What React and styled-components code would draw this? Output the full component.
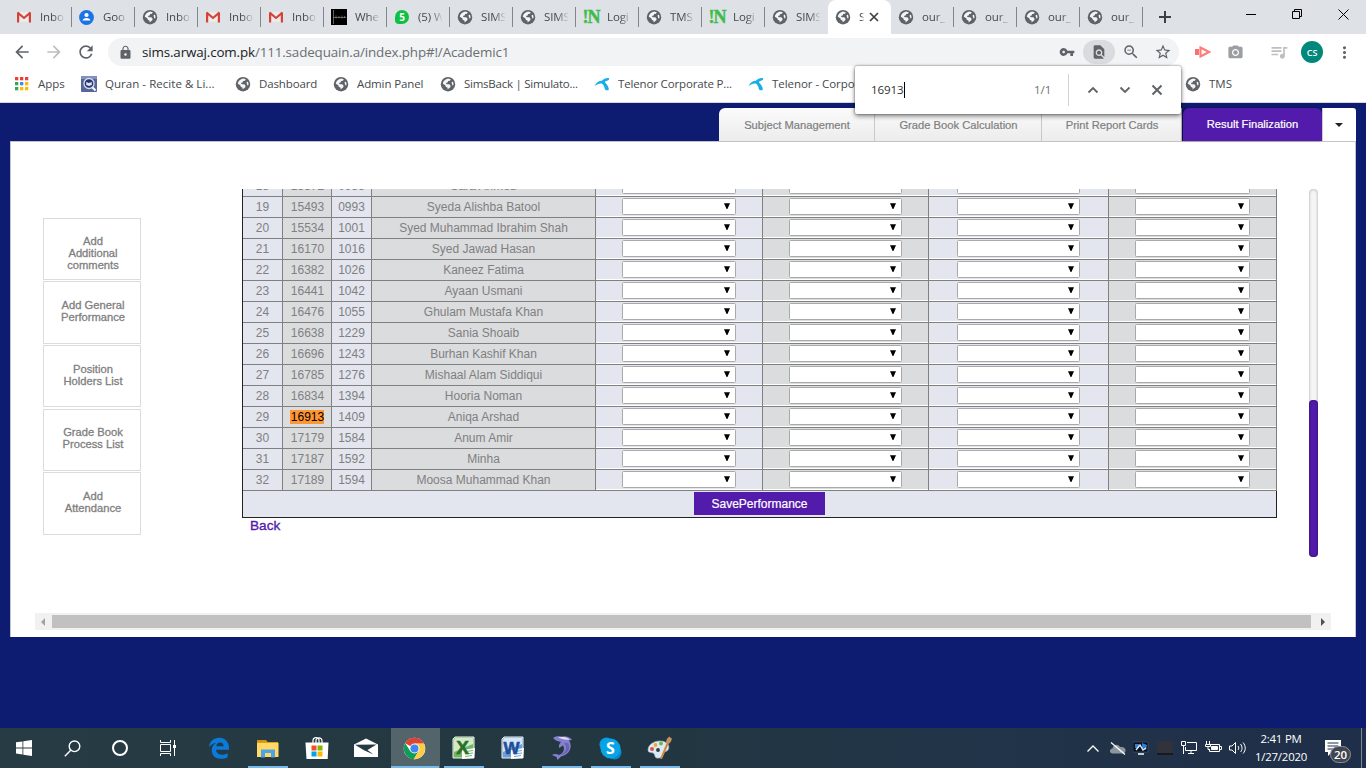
import React from 'react';
import styled, { createGlobalStyle, css } from 'styled-components';
import {
  MdArrowBack, MdArrowForward, MdRefresh, MdLock, MdVpnKey, MdFindInPage,
  MdZoomOut, MdStarBorder, MdCameraAlt, MdMoreVert, MdQueueMusic,
} from 'react-icons/md';

const Global = createGlobalStyle`
  * { box-sizing: border-box; }
  body { margin: 0; background: #0d1c71; overflow: hidden; }
`;

const ui = css`font-family: "Open Sans", "Noto Sans", sans-serif;`;
const arial = css`font-family: "Liberation Sans", Arial, sans-serif;`;

const Screen = styled.div`
  width: 1366px;
  height: 768px;
  display: flex;
  flex-direction: column;
  position: relative;
  overflow: hidden;
  background: #0d1c71;
`;

/* ---------- browser frame ---------- */

const TabStrip = styled.div`
  ${ui}
  height: 34px;
  flex: none;
  display: flex;
  background: #dee1e6;
  padding-left: 9px;
`;

const Tab = styled.div`
  width: 63px;
  height: 34px;
  flex: none;
  display: flex;
  align-items: center;
  padding-left: 7px;
  color: #45494d;
  font-size: 11.5px;
  letter-spacing: -0.1px;
  background: ${(p) => (p.$active ? '#fff' : 'transparent')};
  border-radius: ${(p) => (p.$active ? '8px 8px 0 0' : '0')};
  &::after {
    content: '';
    display: ${(p) => (p.$active || p.$plain ? 'none' : 'block')};
    margin-left: auto;
    width: 1px;
    height: 20px;
    background: #80868b;
  }
`;

const TabTitle = styled.span`
  width: ${(p) => (p.$short ? 5 : 24)}px;
  margin-left: 8px;
  overflow: hidden;
  white-space: nowrap;
  line-height: 18px;
  mask-image: linear-gradient(to right, #000 55%, transparent 105%);
`;

const Favicon = styled.span`
  width: 16px;
  height: 16px;
  flex: none;
  display: flex;
  align-items: center;
  justify-content: center;
  color: #5f6368;
`;

const CloseGlyph = styled.span`
  display: flex;
  margin-left: 5px;
  color: #3c4043;
`;

const NewTab = styled.div`
  display: flex;
  align-items: center;
  justify-content: center;
  width: 20px;
  margin-left: 12px;
  color: #3c4043;
`;

const WindowButtons = styled.div`
  display: flex;
  margin-left: auto;
  height: 29px;
  align-items: center;
`;

const WindowButton = styled.div`
  width: 46px;
  display: flex;
  justify-content: center;
`;

const Toolbar = styled.div`
  ${ui}
  height: 34px;
  flex: none;
  display: flex;
  align-items: center;
  background: #fff;
  padding: 2px 6px 0 6px;
  color: #5f6368;
`;

const ToolButton = styled.div`
  width: ${(p) => p.$w || 32}px;
  height: 24px;
  flex: none;
  display: flex;
  align-items: center;
  justify-content: center;
  color: ${(p) => p.$color || '#5f6368'};
  background: ${(p) => p.$bg || 'transparent'};
  border-radius: 12px;
`;

const Omnibox = styled.div`
  width: 1071px;
  height: 28px;
  margin-left: 6px;
  flex: none;
  display: flex;
  align-items: center;
  background: #f1f3f4;
  border-radius: 14px;
  padding-left: 10px;
`;

const Url = styled.div`
  flex: 1;
  margin-left: 9px;
  font-size: 13.4px;
  letter-spacing: -0.14px;
  white-space: nowrap;
  color: #6b6f73;
  b { font-weight: 400; color: #202124; }
`;

const Avatar = styled.div`
  width: 22px;
  height: 22px;
  border-radius: 50%;
  background: #00897b;
  color: #fff;
  font-size: 9px;
  font-weight: 600;
  display: flex;
  align-items: center;
  justify-content: center;
`;

const ToolDivider = styled.div`
  width: 1px;
  height: 16px;
  margin: 0 5px 0 13px;
  background: #c9ccd0;
`;

const Bookmarks = styled.div`
  ${ui}
  height: 35px;
  flex: none;
  display: flex;
  align-items: center;
  background: #fff;
  border-bottom: 1px solid #d5d7da;
  padding: 0 0 2px 14px;
`;

const Bookmark = styled.div`
  width: ${(p) => p.$w}px;
  flex: none;
  display: flex;
  align-items: center;
  gap: 8px;
  line-height: 18px;
  white-space: nowrap;
  color: #45494d;
  font-size: 11.5px;
  letter-spacing: ${(p) => p.$ls || 0}px;
`;

const FindBar = styled.div`
  ${ui}
  position: absolute;
  left: 855px;
  top: 66px;
  width: 326px;
  height: 48px;
  display: flex;
  align-items: center;
  background: #fff;
  border-radius: 2px;
  box-shadow: 0 0 2px rgba(0, 0, 0, 0.5), 0 2px 5px rgba(0, 0, 0, 0.5);
  padding-left: 16px;
  font-size: 11.6px;
  letter-spacing: -0.1px;
  color: #303134;
`;

const FindQuery = styled.div`
  width: 163px;
  display: flex;
  align-items: center;
  line-height: 16px;
`;

const Caret = styled.i`
  width: 1px;
  height: 16px;
  background: #000;
`;

const FindCount = styled.div`
  width: 34px;
  line-height: 16px;
  color: #6b6f73;
`;

const FindButtons = styled.div`
  display: flex;
  height: 32px;
  align-items: center;
  border-left: 1px solid #d2d4d7;
  padding-left: 8px;
`;

/* ---------- school portal ---------- */

const Portal = styled.main`
  ${arial}
  flex: 1;
  padding: 5px 10px 0;
`;

const PortalTabs = styled.nav`
  display: flex;
  justify-content: flex-end;
  height: 33px;
`;

const PortalTab = styled.div`
  width: ${(p) => p.$w}px;
  display: flex;
  align-items: center;
  justify-content: center;
  padding: 1px 0 0 1px;
  font-size: 11.2px;
  color: #808080;
  background: linear-gradient(#fbfbfb, #ececec);
  border-right: 1px solid #c9c9c9;
  border-radius: ${(p) => (p.$first ? '6px 0 0 0' : '0')};
  -webkit-text-stroke: 0.2px currentColor;
  ${(p) => p.$active && css`
    background: #521bac;
    color: #fff;
    padding: 0 0 1px;
    border-radius: 6px 6px 0 0;
    border-right: 0;
    margin-left: 1px;
    box-shadow: -1px 0 2px rgba(0, 0, 0, 0.5);
  `}
`;

const PortalMore = styled.div`
  width: 34px;
  display: flex;
  align-items: center;
  justify-content: center;
  padding-right: 2px;
  background: #fff;
  border-left: 1px solid #ccc;
  border-radius: 0 3px 0 0;
`;

const Panel = styled.section`
  height: 496px;
  background: #fff;
  border: 1px solid #c4c4c8;
  border-bottom: 0;
`;

const PanelBody = styled.div`
  display: flex;
  height: 471px;
`;

const SideMenu = styled.div`
  width: 98px;
  margin: 76px 0 0 32px;
  display: flex;
  flex-direction: column;
`;

const SideItem = styled.div`
  height: ${(p) => p.$h || 62}px;
  margin-bottom: ${(p) => p.$gap}px;
  padding: ${(p) => p.$top}px 13px 0 15px;
  border: 1px solid #dcdcdc;
  color: #808080;
  font-size: 11.2px;
  line-height: 12px;
  text-align: center;
  -webkit-text-stroke: 0.3px #808080;
`;

const Viewport = styled.div`
  width: 1035px;
  height: 400px;
  margin: 47px 0 0 101px;
  overflow: hidden;
`;

const Table = styled.div`
  margin-top: -13px;
  border-left: 1px solid #222;
`;

const Row = styled.div`
  display: grid;
  grid-template-columns: 40px 49px 40px 224px 167px 166px 180px 168px;
  height: 21px;
`;

const Cell = styled.div`
  display: flex;
  align-items: center;
  justify-content: center;
  padding-left: ${(p) => p.$nudge || 0}px;
  background: ${(p) => (p.$gray ? '#dbdcde' : '#e3e6ef')};
  border-right: 1px solid #808080;
  border-bottom: 1px solid #808080;
  font-size: 12px;
  color: #808080;
`;

const ChoiceCell = styled(Cell)`
  justify-content: flex-start;
  align-items: flex-start;
  padding: 1px 0 0 ${(p) => p.$inset}px;
  box-shadow: inset 0 -1px 0 #fff;
`;

const Choice = styled.div`
  width: ${(p) => p.$w}px;
  height: 17px;
  display: flex;
  align-items: flex-start;
  justify-content: flex-end;
  padding: 4px 5px 0 0;
  background: #fff;
  border: 1px solid #a9a9a9;
  border-radius: 1.5px;
`;

const Hit = styled.mark`
  background: #ff9632;
  color: #000;
  line-height: 14px;
  padding: 0 0 0 1px;
  margin-left: -1px;
`;

const SaveRow = styled.div`
  height: 27px;
  padding-top: 1px;
  background: #e3e6ef;
  border-right: 1px solid #222;
  border-bottom: 1px solid #222;
  display: flex;
  justify-content: center;
`;

const SaveButton = styled.div`
  width: 131px;
  height: 23px;
  background: #521bac;
  color: #fff;
  font-size: 12px;
  -webkit-text-stroke: 0.2px #fff;
  display: flex;
  align-items: center;
  justify-content: center;
`;

const BackLink = styled.div`
  margin-left: 8px;
  font-size: 13.6px;
  line-height: 15px;
  color: #521bac;
  -webkit-text-stroke: 0.35px #521bac;
`;

const ScrollTrack = styled.div`
  width: 9px;
  height: 368px;
  margin: 47px 0 0 32px;
  display: flex;
  align-items: flex-end;
  border-radius: 5px;
  background: #f5f5f5;
  box-shadow: inset 0 0 3px rgba(0, 0, 0, 0.35);
`;

const ScrollThumb = styled.div`
  width: 9px;
  height: 157px;
  border-radius: 4px;
  background: #521bac;
  box-shadow: inset 0 0 3px rgba(0, 0, 0, 0.5);
`;

const HScroll = styled.div`
  width: 1296px;
  height: 17px;
  margin-left: 24px;
  display: flex;
  align-items: center;
  justify-content: space-between;
  background: #f1f1f1;
`;

const HThumb = styled.div`
  width: 1259px;
  height: 13px;
  background: #c1c1c1;
`;

const HArrow = styled.div`
  flex: 1;
  display: flex;
  justify-content: center;
  padding-right: 1px;
  &:last-child { flex: none; width: 20px; padding-left: 4px; }
`;

/* ---------- taskbar ---------- */

const Taskbar = styled.footer`
  ${ui}
  height: 40px;
  flex: none;
  display: flex;
  color: #fff;
  background: linear-gradient(to right, #263b43, #233741 45%, #213448 70%, #1f2e49);
`;

const Task = styled.div`
  width: ${(p) => p.$w || 49}px;
  height: 40px;
  display: flex;
  align-items: center;
  justify-content: center;
  padding-right: ${(p) => (p.$w ? 0 : 2)}px;
  margin-left: ${(p) => p.$gap || 0}px;
  background: ${(p) => (p.$active ? '#53646b' : 'transparent')};
  position: relative;
  &::after {
    content: '';
    position: absolute;
    bottom: 0;
    left: ${(p) => (p.$active ? 0 : 4)}px;
    right: ${(p) => (p.$active ? 1 : 5)}px;
    height: 2px;
    background: ${(p) => (p.$open ? '#76b9ed' : 'transparent')};
  }
`;

const Tray = styled.div`
  margin-left: auto;
  display: flex;
  align-items: center;
`;

const TrayIcon = styled.div`
  width: 24px;
  display: flex;
  justify-content: center;
`;

const Clock = styled.div`
  width: 64px;
  text-align: center;
  font-size: 11.4px;
  line-height: 18px;
  letter-spacing: -0.2px;
  padding-bottom: 1px;
  white-space: nowrap;
`;

const Notice = styled.div`
  width: 38px;
  height: 40px;
  margin-left: 10px;
  padding-top: 10px;
`;

const ShowDesktop = styled.div`
  width: 5px;
  height: 40px;
  border-left: 1px solid #7d8796;
`;

/* ---------- drawings ---------- */

const Globe = () => (
  <svg width="16" height="16" viewBox="0 0 16 16">
    <circle cx="8" cy="8.200" r="7.200" fill="#5f6368" />
    <path d="M6.200 3.300 8 2.400 10.800 3.200 10 4.700 8.200 5.100 7.600 6.500 5.800 7 6.800 8.300 9.300 8.300 10.600 9.800 10.300 11.300 8.700 12.600 7.600 13.500V11.700L5.800 10.700 5.300 9.300 2.800 7.800C3.100 5.700 4.300 4.200 6.200 3.300zM11.600 6 13 5.700 13.600 8.200 12.900 9.800 11.900 8.200z" fill="#f4f5f6" />
  </svg>
);

const Line = ({ d, w = 12, h = 12, sw = 2 }) => (
  <svg width={w} height={h} viewBox={`0 0 ${w} ${h}`} fill="none" stroke="currentColor" strokeWidth={sw}>
    <path d={d} />
  </svg>
);

const Gmail = () => (
  <svg width="16" height="16" viewBox="0 0 16 16">
    <path d="M2 3h12v10H2z" fill="#eceaea" />
    <path d="M1 13.400V3.600h2.200v9.800zM12.800 13.400V3.600H15v9.800z" fill="#d54236" />
    <path d="M1.600 3.600 8 9l6.400-5.400" fill="none" stroke="#d54236" strokeWidth="2.100" />
  </svg>
);

const Contact = () => (
  <svg width="16" height="16" viewBox="0 0 16 16">
    <circle cx="7.500" cy="8.500" r="7.400" fill="#1a73e8" />
    <circle cx="7.500" cy="6" r="2.100" fill="#fff" />
    <path d="M3.600 11.600c0-3.600 7.800-3.600 7.800 0z" fill="#fff" />
  </svg>
);

const BlackTile = () => (
  <svg width="16" height="16" viewBox="0 0 16 16">
    <path d="M0 0h16v16H0z" fill="#000" />
    <path d="M2.500 1v14M2 8.500h13M5 6.500v3M8 7v2M11 6.500v3M13.500 7v2" stroke="#8a8a8a" strokeWidth=".7" />
  </svg>
);

const FavText = styled.span`
  width: 14px;
  height: 14px;
  border-radius: 7px 7px 7px 4px;
  background: #0dc143;
  color: #fff;
  font-size: 10px;
  font-weight: 700;
  line-height: 14px;
  text-align: center;
`;

const SerifMark = styled.span`
  color: #3dbb4c;
  font: 700 18px/18px "Liberation Serif", serif;
  letter-spacing: -1px;
  -webkit-text-stroke: 0.4px #3dbb4c;
`;

const AppsGrid = () => (
  <svg width="16" height="16" viewBox="0 0 16 16">
    {['#ea4335', '#ea4335', '#ea4335', '#34a853', '#4285f4', '#fbbc05', '#34a853', '#fbbc05', '#fbbc05'].map((c, i) => (
      <rect key={i} x={1 + (i % 3) * 5} y={1 + Math.floor(i / 3) * 5} width="3.300" height="3.300" fill={c} />
    ))}
  </svg>
);

const Quran = () => (
  <svg width="16" height="16" viewBox="0 0 16 16">
    <rect width="16" height="16" rx="1" fill="#56669b" />
    <path d="M0 0h16v3H0z" fill="#8190bd" />
    <circle cx="8" cy="7.500" r="5" fill="#26366e" stroke="#d6dcee" strokeWidth="1.300" />
    <path d="M5.200 6 8 7l2.800-1v3L8 10 5.200 9z" fill="#dfe5f5" />
    <path d="m11.500 11.500 3 3" stroke="#fff" strokeWidth="2" />
  </svg>
);

const Telenor = () => (
  <svg width="16" height="16" viewBox="0 0 16 16">
    <path d="M.6 9.800C2.600 6.200 5.400 4.600 7.800 4.800 9.500 2.800 12 1.700 14.800 2c1 1.200-.1 2.300-1.700 2.700-1.200.3-1.900.8-2.200 1.500 1.700 2 4 4.400 4 7.300-1.500 1.700-3.900.7-4.200-1.100-.3-2-1.100-3.400-2.300-4.500C6 6.900 3.600 8.200.6 9.800z" fill="#19aee8" />
  </svg>
);

const CastArrow = () => (
  <svg width="16" height="12" viewBox="0 0 16 12">
    <path d="M0 3h4v6H0z" fill="#ff6d6d" />
    <path d="M5.500 1.500V10.500L14 6z" fill="none" stroke="#ff7b7b" strokeWidth="2.100" />
  </svg>
);

const DownArrow = () => (
  <svg width="6" height="6" viewBox="0 0 6 6"><path d="M0 .3h6L3.400 6h-.8z" fill="#000" /></svg>
);

const Windows = () => (
  <svg width="16" height="16" viewBox="0 0 16 16" fill="#fff">
    <path d="M0 2.300 6.500 1.400V7.500H0zM7.300 1.300 16 0v7.500H7.300zM0 8.400h6.500v6.100L0 13.600zM7.300 8.400H16V16l-8.700-1.300z" />
  </svg>
);

const SearchGlyph = () => (
  <svg width="17" height="17" viewBox="0 0 17 17" fill="none" stroke="#fff" strokeWidth="1.400">
    <circle cx="10.500" cy="6.300" r="5.300" /><path d="M6.700 10.200.8 16.200" />
  </svg>
);

const Cortana = () => (
  <svg width="18" height="18" viewBox="0 0 18 18"><circle cx="9" cy="9" r="7" fill="none" stroke="#fff" strokeWidth="2" /></svg>
);

const TaskView = () => (
  <svg width="18" height="16" viewBox="0 0 18 16" fill="none" stroke="#fff">
    <path d="M1.500 0v2.500h10V0M1.500 16v-2.500h10V16M1.500 4.500h10v7h-10zM15.500 0v16" />
    <path d="M14 5h3v3h-3z" fill="#fff" stroke="none" />
  </svg>
);

const Edge = () => (
  <svg width="22" height="22" viewBox="0 0 22 22">
    <path d="M1 10.300C1.600 4.500 5.600.8 11.200.8c6 0 9.800 4.400 9.800 10v2H8.100c.2 3.500 3 4.900 6 4.900 2.300 0 4-.6 5.500-1.500v4.100c-1.900 1-4.200 1.500-6.600 1.500-5.700 0-9.300-3.400-9.300-8.500 0-3.300 1.700-6 4.700-7.500C5.100 6.300 2.700 7.700 1 10.300zm7.200-1h7.400c0-2.300-1-3.900-3.500-3.900-2.200 0-3.700 1.700-3.900 3.900z" fill="#0a7bdc" />
  </svg>
);

const Folder = () => (
  <svg width="22" height="19" viewBox="0 0 22 19">
    <path d="M0 1h9l1.500 2H21v15H0z" fill="#e0a21b" />
    <path d="M0 4h21.500v14H0z" fill="#ffd866" />
    <path d="M4 18.500V10.500h14v8h-4V14H8v4.500z" fill="#4da3e6" />
    <path d="M0 1h9v2H0z" fill="#d5930d" />
  </svg>
);

const Store = () => (
  <svg width="24" height="24" viewBox="0 0 24 24">
    <path d="M8 7V4.500C8 1 13 .5 14 3.500V7M11 7V4c1-3.500 6-2.500 6 .8V7" fill="none" stroke="#fff" strokeWidth="1.200" />
    <path d="M.5 6.500h23l-.8 16.500H1.500z" fill="#fff" />
    <path d="M6.500 9.500h5v5h-5z" fill="#f04f23" /><path d="M12.500 9.500h5v5h-5z" fill="#7fb900" />
    <path d="M6.500 15.500h5v5h-5z" fill="#00a3ee" /><path d="M12.500 15.500h5v5h-5z" fill="#feb800" />
  </svg>
);

const Mail = () => (
  <svg width="24" height="20" viewBox="0 0 24 20">
    <path d="M0 6.500 12 .5l12 6V19H0z" fill="#fff" />
    <path d="m1 6.800 21.500-.2L13.500 12l6 4.500L10 12.300z" fill="#263b43" />
  </svg>
);

const Chrome = () => (
  <svg width="23" height="23" viewBox="0 0 48 48">
    <circle cx="24" cy="24" r="22.500" fill="#fff" />
    <path d="M24 24 4.500 12.800A22.500 22.500 0 0 1 43.500 12.800L43 14H24z" fill="#db4437" />
    <path d="M4.500 12.800A22.500 22.500 0 0 0 22.500 46.500L32.700 29 24 24l-8.700 5z" fill="#0f9d58" />
    <path d="M43.500 13.700A22.500 22.500 0 0 1 22.500 46.500L32.700 29 33 19 24 13.700z" fill="#ffcd40" />
    <circle cx="24" cy="24" r="10.500" fill="#f1f1f1" /><circle cx="24" cy="24" r="8.300" fill="#4285f4" />
  </svg>
);

const OfficeTile = ({ letter, ink, pale, mid }) => (
  <svg width="24" height="24" viewBox="0 0 24 24">
    <path d="M3 1h19v21H1V3z" fill={mid} stroke="#eef3f3" />
    <path d="M3 2h18v6L2 16V4z" fill={pale} />
    <path d="m10 14 13-2-1 10-12 1z" fill="#fff" />
    <path d="m14 15.500 7-1M13 18l8-1M13 20.500l7-1" stroke={mid} />
    <text x="10.500" y="17.500" textAnchor="middle" fill={ink} stroke={ink} strokeWidth=".6" fontFamily="Liberation Sans, sans-serif" fontWeight="700" fontSize={letter === 'W' ? 17 : 19}>{letter}</text>
  </svg>
);

const Dolphin = () => (
  <svg width="24" height="26" viewBox="0 0 24 26">
    <path d="M3 3C6 .5 9 1 11 2c3-1.500 7-1 11 2.500-1 .8-2 1-3 .8C23 12 20 19.500 11 21.500L7.500 25l-1-3L2 20c2-1.500 5-1 7 0 5-2 6-6 4-9.500L9 13c-.5-3 .5-4.500 2-6C8 6.500 5 5.500 3 3z" fill="#8580ce" />
    <path d="M8 2c5-.5 8 0 12 2.500-5 .5-8 0-12-2.500z" fill="#dedcf5" />
    <path d="M14 8c4 5 2 9-3 12 7-1 10-6 7-12z" fill="#6a64b4" />
  </svg>
);

const SkypeGlyph = () => (
  <svg width="23" height="23" viewBox="0 0 23 23">
    <circle cx="7.500" cy="7.500" r="7" fill="#0c9be0" />
    <circle cx="15.500" cy="15.500" r="7" fill="#0987cd" />
    <circle cx="11.500" cy="11.500" r="10" fill="#08a5e6" />
    <text x="11.500" y="17" textAnchor="middle" fill="#fff" fontFamily="Open Sans, sans-serif" fontWeight="700" fontSize="16">S</text>
  </svg>
);

const Paint = () => (
  <svg width="25" height="24" viewBox="0 0 25 24">
    <path d="M1 14C1 8 8 4.500 14 5c6 .5 9 4 7.500 8-1 3-4 2-5 4s0 4-4 5C6 23 9 18 6 17c-2-.7-5 0-5-3z" fill="#dbeaf3" stroke="#90b2c8" strokeWidth=".6" />
    <circle cx="5" cy="13" r="2" fill="#e2504a" /><circle cx="8.500" cy="9" r="1.900" fill="#f0a730" /><circle cx="14" cy="7.500" r="1.900" fill="#65b84c" /><circle cx="11" cy="14" r="1.900" fill="#263b43" />
    <path d="m13 23 6.500-16 2 1L15 23z" fill="#d78538" /><path d="M19 7c0-3 1-5 3.500-6.500C24 3 25 2 25 2c-.5 3-1.500 5-3.500 6z" fill="#c7905d" />
  </svg>
);

/* ---------- data ---------- */

const gmail = <Gmail />;
const globe = <Globe />;
const insight = <SerifMark>!N</SerifMark>;

const TABS = [
  ['Inbo', gmail], ['Goo', <Contact />], ['Inbo', globe], ['Inbo', gmail], ['Inbo', gmail],
  ['Whe', <BlackTile />], ['(5) W', <FavText>5</FavText>], ['SIMS', globe], ['SIMS', globe],
  ['Logi', insight], ['TMS', globe], ['Logi', insight], ['SIMS', globe], ['S', globe],
  ['our_', globe], ['our_', globe], ['our_', globe], ['our_', globe],
];

const BOOKMARKS = [
  ['Apps', <AppsGrid />, 67, 0], ['Quran - Recite & Li...', <Quran />, 154, 0.04], ['Dashboard', globe, 98, -0.12],
  ['Admin Panel', globe, 107, -0.12], ['SimsBack | Simulato...', globe, 154, -0.25], ['Telenor Corporate P...', <Telenor />, 154, -0.15],
  ['Telenor - Corpo', <Telenor />, 437, -0.05], ['TMS', globe, 80, 0],
];

const STUDENTS = [
  [18, '15372', '0988', 'Sara Ahmed'],
  [19, '15493', '0993', 'Syeda Alishba Batool'],
  [20, '15534', '1001', 'Syed Muhammad Ibrahim Shah'],
  [21, '16170', '1016', 'Syed Jawad Hasan'],
  [22, '16382', '1026', 'Kaneez Fatima'],
  [23, '16441', '1042', 'Ayaan Usmani'],
  [24, '16476', '1055', 'Ghulam Mustafa Khan'],
  [25, '16638', '1229', 'Sania Shoaib'],
  [26, '16696', '1243', 'Burhan Kashif Khan'],
  [27, '16785', '1276', 'Mishaal Alam Siddiqui'],
  [28, '16834', '1394', 'Hooria Noman'],
  [29, '16913', '1409', 'Aniqa Arshad'],
  [30, '17179', '1584', 'Anum Amir'],
  [31, '17187', '1592', 'Minha'],
  [32, '17189', '1594', 'Moosa Muhammad Khan'],
];

const SIDE = [
  ['Add Additional comments', 1, 16], ['Add General Performance', 1, 17, 63], ['Position Holders List', 2, 17],
  ['Grade Book Process List', 1, 16], ['Add Attendance', 0, 17, 63],
];

const CHOICES = [[114, 26], [113, 26], [123, 28], [115, 26]];

export default function App() {
  return (
    <Screen>
      <Global />
      <TabStrip>
        {TABS.map(([title, icon], i) => (
          <Tab key={i} $active={i === 13} $plain={i === 12}>
            <Favicon>{icon}</Favicon>
            <TabTitle $short={i === 13}>{title}</TabTitle>
            {i === 13 && <CloseGlyph><Line w={10} h={10} sw={1.7} d="m1 1 8 8m0-8-8 8" /></CloseGlyph>}
          </Tab>
        ))}
        <NewTab><Line w={12} h={12} d="M6 0v12M0 6h12" /></NewTab>
        <WindowButtons>
          <WindowButton><svg width="10" height="10"><path d="M0 4.500h10" stroke="#000" /></svg></WindowButton>
          <WindowButton><svg width="11" height="11" fill="none" stroke="#000"><path d="M.5 2.500h7v7h-7zM2.500 2V.5h7v7H8" /></svg></WindowButton>
          <WindowButton><svg width="11" height="11" stroke="#000"><path d="m.5.5 10 10m0-10-10 10" /></svg></WindowButton>
        </WindowButtons>
      </TabStrip>

      <Toolbar>
        <ToolButton><MdArrowBack size={20} /></ToolButton>
        <ToolButton $color="#bcbec1"><MdArrowForward size={20} /></ToolButton>
        <ToolButton><MdRefresh size={20} /></ToolButton>
        <Omnibox>
          <MdLock size={15} />
          <Url><b>sims.arwaj.com.pk</b>/111.sadequain.a/index.php#!/Academic1</Url>
          <ToolButton><MdVpnKey size={16} /></ToolButton>
          <ToolButton $bg="#d9dbde"><MdFindInPage size={16} /></ToolButton>
          <ToolButton><MdZoomOut size={18} /></ToolButton>
          <ToolButton><MdStarBorder size={18} /></ToolButton>
        </Omnibox>
        <ToolButton $w={48}><CastArrow /></ToolButton>
        <ToolButton $w={17} $color="#9c9ea1"><MdCameraAlt size={17} /></ToolButton>
        <ToolDivider />
        <ToolButton $w={34} $color="#bdbfc2"><MdQueueMusic size={20} /></ToolButton>
        <ToolButton><Avatar>CS</Avatar></ToolButton>
        <ToolButton><MdMoreVert size={19} /></ToolButton>
      </Toolbar>

      <Bookmarks>
        {BOOKMARKS.map(([label, icon, w, ls]) => (
          <Bookmark key={label} $w={w} $ls={ls}><Favicon>{icon}</Favicon>{label}</Bookmark>
        ))}
      </Bookmarks>

      <Portal>
        <PortalTabs>
          <PortalTab $w={156} $first>Subject Management</PortalTab>
          <PortalTab $w={167}>Grade Book Calculation</PortalTab>
          <PortalTab $w={140}>Print Report Cards</PortalTab>
          <PortalTab $w={139} $active>Result Finalization</PortalTab>
          <PortalMore><svg width="8" height="4"><path d="M0 0h8L4 4z" fill="#222" /></svg></PortalMore>
        </PortalTabs>
        <Panel>
          <PanelBody>
            <SideMenu>
              {SIDE.map(([label, gap, top, h]) => <SideItem key={label} $gap={gap} $top={top} $h={h}>{label}</SideItem>)}
            </SideMenu>
            <Viewport>
              <Table>
                {STUDENTS.map(([no, gr, id, name]) => (
                  <Row key={no}>
                    <Cell>{no}</Cell>
                    <Cell $gray $nudge={1}>{gr === '16913' ? <Hit>{gr}</Hit> : gr}</Cell>
                    <Cell>{id}</Cell>
                    <Cell $gray>{name}</Cell>
                    {CHOICES.map(([w, inset], i) => (
                      <ChoiceCell key={i} $gray={i % 2 === 1} $inset={inset}>
                        <Choice $w={w}><DownArrow /></Choice>
                      </ChoiceCell>
                    ))}
                  </Row>
                ))}
                <SaveRow><SaveButton>SavePerformance</SaveButton></SaveRow>
              </Table>
              <BackLink>Back</BackLink>
            </Viewport>
            <ScrollTrack><ScrollThumb /></ScrollTrack>
          </PanelBody>
          <HScroll>
            <HArrow><svg width="4" height="8"><path d="M4 0v8L0 4z" fill="#a3a3a3" /></svg></HArrow>
            <HThumb />
            <HArrow><svg width="4" height="8"><path d="M0 0v8l4-4z" fill="#505050" /></svg></HArrow>
          </HScroll>
        </Panel>
      </Portal>

      <Taskbar>
        <Task $w={48}><Windows /></Task>
        <Task $w={48}><SearchGlyph /></Task>
        <Task $w={48}><Cortana /></Task>
        <Task $w={48}><TaskView /></Task>
        <Task $gap={3}><Edge /></Task>
        <Task $open><Folder /></Task>
        <Task><Store /></Task>
        <Task><Mail /></Task>
        <Task $open $active><Chrome /></Task>
        <Task $open><OfficeTile letter="X" ink="#28702d" pale="#d3e9c8" mid="#72b65e" /></Task>
        <Task><OfficeTile letter="W" ink="#1b4f9c" pale="#d6e5f5" mid="#6f9dd5" /></Task>
        <Task $open><Dolphin /></Task>
        <Task $open><SkypeGlyph /></Task>
        <Task $open><Paint /></Task>
        <Tray>
          <TrayIcon><svg width="12" height="7" fill="none" stroke="#fff" strokeWidth="1.300"><path d="m.5 6.500 5.500-5.500 5.500 5.500" /></svg></TrayIcon>
          <TrayIcon>
            <svg width="17" height="13" viewBox="0 0 17 13">
              <path d="M4 11.500C0 11.500 0 7 3.500 6.500 4 2.500 9 1 11 5c4-.5 6 1.500 5.500 4-.5 2-1.500 2.500-3 2.500z" fill="#8e959d" />
              <path d="m2 .5 14 12" stroke="#fff" strokeWidth="1.200" />
            </svg>
          </TrayIcon>
          <TrayIcon>
            <svg width="16" height="15" viewBox="0 0 16 15">
              <path d="M0 1h15v10H0z" fill="#08111f" stroke="#506070" strokeWidth=".6" />
              <path d="M2 3h4v4H2zM9 2l5 2-1 5-4-2z" fill="#2f7fd5" /><path d="m3 9 4-5 3 5 3-2" stroke="#dceaff" strokeWidth="1.400" fill="none" /><path d="M5 12h6v2H5z" fill="#c3cbd5" />
            </svg>
          </TrayIcon>
          <TrayIcon><svg width="16" height="15"><path d="M0 0h16v12H0z" fill="#30343a" /><path d="M0 12h16v2H0z" fill="#16191f" /></svg></TrayIcon>
          <TrayIcon>
            <svg width="17" height="14" viewBox="0 0 17 14" fill="none" stroke="#fff"><path d="M.5.500h4v4h-4zM6 1.500h9.500v8H4.500V6M2.500 5v8M7 12.500h6M10 10v2" /></svg>
          </TrayIcon>
          <TrayIcon>
            <svg width="17" height="14" viewBox="0 0 17 14" fill="none" stroke="#fff"><path d="M5 3.500h9.500v7H4.500V8M15 5.500h1.500v3H15" /><path d="M6.500 5.500h6v3h-6z" fill="#fff" /><path d="M1.500 0v3M4.500 0v3M.5 3.500h5v2h-5zM3 6v2.500h2" /></svg>
          </TrayIcon>
          <TrayIcon>
            <svg width="17" height="14" viewBox="0 0 17 14" fill="none" stroke="#fff"><path d="M.5 5h2.500L6.500 1.500v11L3 9H.5zM9 5c1 1.500 1 3 0 4M11.500 3c2 2.500 2 6 0 8M14 1.500c3 3.500 3 8 0 11" /></svg>
          </TrayIcon>
          <Clock>2:41 PM<br />1/27/2020</Clock>
          <Notice>
            <svg width="30" height="30" viewBox="0 0 30 30">
              <path d="M2 2h16v12H9l-4 4v-4H2z" fill="#fff" />
              <path d="M4.500 5h11M4.500 8h11M4.500 11h8" stroke="#1f2e49" />
              <rect x="7.500" y="8.500" width="20" height="16" rx="8" fill="#40464f" stroke="#8c9097" />
              <text x="17.500" y="20.500" textAnchor="middle" fill="#fff" fontFamily="Open Sans, sans-serif" fontSize="11.500" fontWeight="600">20</text>
            </svg>
          </Notice>
          <ShowDesktop />
        </Tray>
      </Taskbar>

      <FindBar>
        <FindQuery>16913<Caret /></FindQuery>
        <FindCount>1/1</FindCount>
        <FindButtons>
          <ToolButton><Line w={12} h={8} sw={1.8} d="m1.500 6.500 4.500-4.500 4.500 4.500" /></ToolButton>
          <ToolButton><Line w={12} h={8} sw={1.8} d="m1.500 1.500 4.500 4.500 4.500-4.500" /></ToolButton>
          <ToolButton><Line w={12} h={12} sw={2} d="m1.500 1.500 9 9m0-9-9 9" /></ToolButton>
        </FindButtons>
      </FindBar>
    </Screen>
  );
}
